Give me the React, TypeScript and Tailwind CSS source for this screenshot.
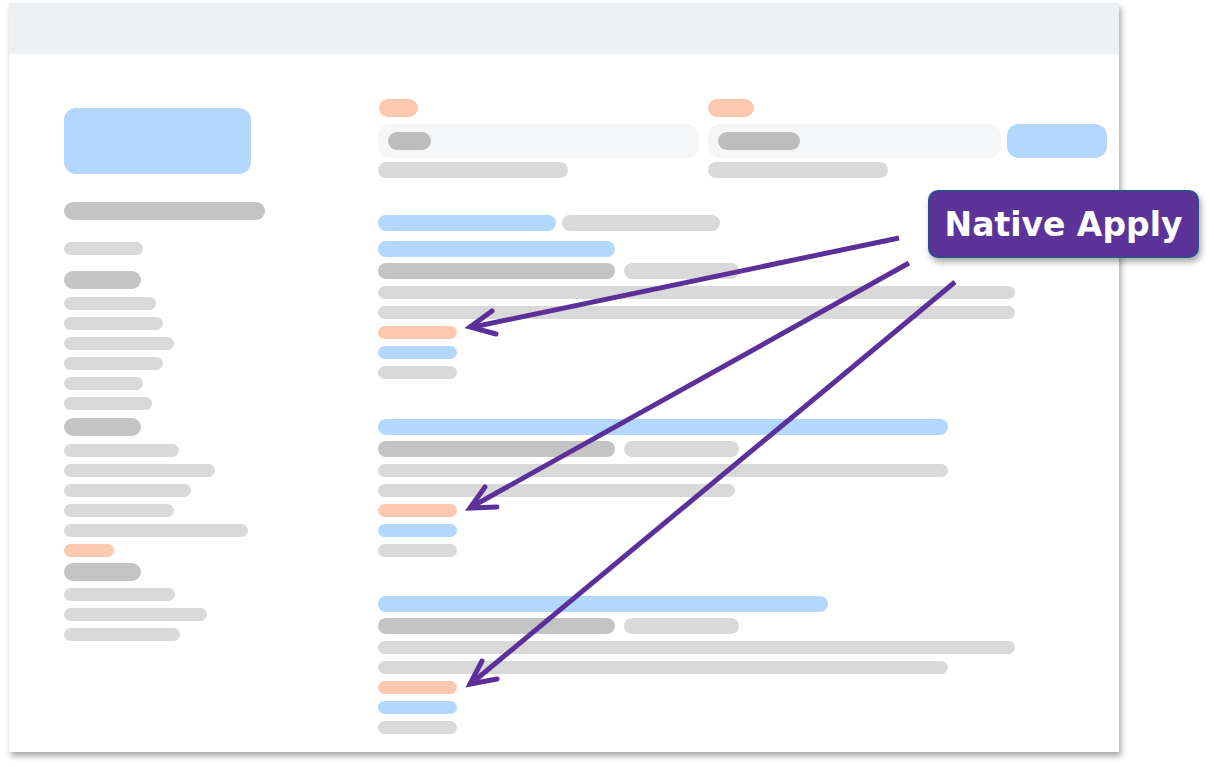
import React from "react";

type Row = { c: string; w: number; h: number; mt: number };

const LIGHT = "bg-[#d9d9d9]";
const DARK = "bg-[#c4c4c4]";
const BLUE = "bg-[#b3d7fe]";
const ORANGE = "bg-[#fdc8b0]";

function Bar({ c, w, h, mt }: Row) {
  return (
    <div
      className={`${c} rounded-full shrink-0`}
      style={{ width: w, height: h, marginTop: mt }}
    />
  );
}

const sidebar: Row[] = [
  { c: DARK, w: 201, h: 18, mt: 28 },
  { c: LIGHT, w: 79, h: 13, mt: 22 },
  { c: DARK, w: 77, h: 18, mt: 16 },
  { c: LIGHT, w: 92, h: 13, mt: 8 },
  { c: LIGHT, w: 99, h: 13, mt: 7 },
  { c: LIGHT, w: 110, h: 13, mt: 7 },
  { c: LIGHT, w: 99, h: 13, mt: 7 },
  { c: LIGHT, w: 79, h: 13, mt: 7 },
  { c: LIGHT, w: 88, h: 13, mt: 7 },
  { c: DARK, w: 77, h: 18, mt: 8 },
  { c: LIGHT, w: 115, h: 13, mt: 8 },
  { c: LIGHT, w: 151, h: 13, mt: 7 },
  { c: LIGHT, w: 127, h: 13, mt: 7 },
  { c: LIGHT, w: 110, h: 13, mt: 7 },
  { c: LIGHT, w: 184, h: 13, mt: 7 },
  { c: ORANGE, w: 50, h: 13, mt: 7 },
  { c: DARK, w: 77, h: 18, mt: 6 },
  { c: LIGHT, w: 111, h: 13, mt: 7 },
  { c: LIGHT, w: 143, h: 13, mt: 7 },
  { c: LIGHT, w: 116, h: 13, mt: 7 },
];

function Job({
  mt,
  title,
  titleExtra,
  lines,
}: {
  mt: number;
  title: number;
  titleExtra?: number;
  lines: number[];
}) {
  return (
    <div className="flex flex-col" style={{ marginTop: mt }}>
      {titleExtra ? (
        <>
          <div className="flex gap-[6px]">
            <div className={`${BLUE} rounded-full h-[16px] w-[178px]`} />
            <div className={`${LIGHT} rounded-full h-[16px] w-[158px]`} />
          </div>
          <div className={`${BLUE} rounded-full h-[16px] mt-[10px]`} style={{ width: title }} />
        </>
      ) : (
        <div className={`${BLUE} rounded-full h-[16px]`} style={{ width: title }} />
      )}
      <div className="flex gap-[9px] mt-[6px]">
        <div className={`${DARK} rounded-full h-[16px] w-[237px]`} />
        <div className={`${LIGHT} rounded-full h-[16px] w-[115px]`} />
      </div>
      {lines.map((w, i) => (
        <Bar key={i} c={LIGHT} w={w} h={13} mt={7} />
      ))}
      <Bar c={ORANGE} w={79} h={13} mt={7} />
      <Bar c={BLUE} w={79} h={13} mt={7} />
      <Bar c={LIGHT} w={79} h={13} mt={7} />
    </div>
  );
}

export default function App() {
  return (
    <div className="relative w-[1214px] h-[767px] bg-white overflow-hidden">
      <div className="pt-[3px] pl-[9px]">
        <div className="w-[1110px] h-[749px] bg-white flex flex-col shadow-[2px_4px_6px_rgba(0,0,0,0.35)]">
          <div className="h-[51px] bg-[#edf0f3] shrink-0" />
          <div className="flex flex-1">
            <div className="w-[369px] shrink-0 pl-[55px] pt-[54px] flex flex-col">
              <div className={`${BLUE} w-[187px] h-[66px] rounded-[12px]`} />
              {sidebar.map((r, i) => (
                <Bar key={i} {...r} />
              ))}
            </div>
            <div className="flex flex-col pt-[45px]">
              <div className="flex">
                <div className="flex flex-col w-[321px]">
                  <div className={`${ORANGE} w-[39px] h-[18px] rounded-full ml-[1px]`} />
                  <div className="mt-[7px] h-[34px] rounded-[12px] bg-[#f5f6f8] flex items-center pl-[10px]">
                    <div className="w-[43px] h-[18px] rounded-full bg-[#bdbdbd]" />
                  </div>
                  <div className={`${LIGHT} mt-[4px] w-[190px] h-[16px] rounded-full`} />
                </div>
                <div className="flex flex-col w-[293px] ml-[9px]">
                  <div className={`${ORANGE} w-[46px] h-[18px] rounded-full`} />
                  <div className="mt-[7px] h-[34px] rounded-[12px] bg-[#f5f6f8] flex items-center pl-[10px]">
                    <div className="w-[82px] h-[18px] rounded-full bg-[#bdbdbd]" />
                  </div>
                  <div className={`${LIGHT} mt-[4px] w-[180px] h-[16px] rounded-full`} />
                </div>
                <div className={`${BLUE} ml-[6px] mt-[25px] w-[100px] h-[34px] rounded-[12px]`} />
              </div>
              <Job mt={37} title={237} titleExtra={158} lines={[637, 637]} />
              <Job mt={40} title={570} lines={[570, 357]} />
              <Job mt={39} title={450} lines={[637, 570]} />
            </div>
          </div>
        </div>
      </div>

      <svg
        className="absolute left-0 top-0 pointer-events-none"
        width="1214"
        height="767"
        viewBox="0 0 1214 767"
      >
        <g stroke="#5b3199" strokeWidth="5" fill="none">
          <line x1="899" y1="238" x2="473" y2="327" />
          <polyline points="492,311 470,327 496,334" strokeLinecap="round" strokeLinejoin="miter" />
          <line x1="909" y1="263" x2="473" y2="506" />
          <polyline points="485,487 470,508 497,507" strokeLinecap="round" strokeLinejoin="miter" />
          <line x1="955" y1="282" x2="473" y2="682" />
          <polyline points="482,661 470,684 497,679" strokeLinecap="round" strokeLinejoin="miter" />
        </g>
      </svg>

      <div className="absolute left-[928px] top-[190px] w-[271px] h-[68px] rounded-[10px] bg-[#5c3399] border-2 border-[#2f4d8c] shadow-[2px_4px_6px_rgba(0,0,0,0.35)] flex items-center justify-center">
        <span className="text-white font-bold text-[33px] leading-none font-['DejaVu_Sans',sans-serif]">
          Native Apply
        </span>
      </div>
    </div>
  );
}
